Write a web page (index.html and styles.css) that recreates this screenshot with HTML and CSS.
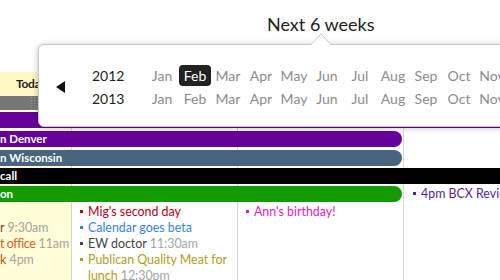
FILE: index.html
```html
<!DOCTYPE html>
<html lang="en">
<head>
<meta charset="UTF-8">
<meta name="viewport" content="width=device-width, initial-scale=1.0">
<title>Calendar</title>
<link rel="stylesheet" href="styles.css">
</head>
<body>
<header class="top">
    <h1 class="range">Next 6 weeks</h1>
</header>

<div class="week">
    <div class="col today"></div>
    <div class="col c2"></div>
    <div class="col c3"></div>
    <div class="col c4"></div>

    <div class="day-name">Today</div>

    <div class="bar gray r2"><span class="grip"></span></div>
    <div class="bar purple r3 wide"><span class="cut">Jennifer</span></div>
    <div class="bar purple r4"><span class="cut">Jason i</span>n Denver</div>
    <div class="bar slate r5"><span class="cut">Jamie i</span>n Wisconsin</div>
    <div class="bar black r6 wide"><span class="cut">Conference </span>call</div>
    <div class="bar green r7"><span class="cut">Vacati</span>on</div>

    <ul class="events e4">
        <li class="ev-purple">4pm BCX Review</li>
    </ul>

    <ul class="events e1">
        <li class="blank">&nbsp;</li>
        <li class="ev-brown"><span class="cut">Call docto</span>r <span class="t">9:30am</span></li>
        <li class="ev-orange"><span class="cut">Pos</span><span class="tight">t office</span> <span class="t">11am</span></li>
        <li class="ev-rust"><span class="cut">Wal</span>k <span class="t">4pm</span></li>
    </ul>
    <ul class="events e2">
        <li class="ev-red">Mig's second day</li>
        <li class="ev-blue">Calendar goes beta</li>
        <li class="ev-dark">EW doctor <span class="t">11:30am</span></li>
        <li class="ev-gold">Publican Quality Meat for lunch <span class="t">12:30pm</span></li>
    </ul>
    <ul class="events e3">
        <li class="ev-pink">Ann's birthday!</li>
    </ul>
</div>

<div class="picker">
    <svg class="notch" width="22" height="12" viewBox="0 0 22 12">
        <path d="M0 12.5 L11 1 L22 12.5" fill="#fff" stroke="#c9c9c9"/>
    </svg>
    <span class="prev"></span>
    <div class="years">
        <span class="yr">2012</span>
        <span class="m">Jan</span>
        <span class="m on">Feb</span>
        <span class="m">Mar</span>
        <span class="m">Apr</span>
        <span class="m">May</span>
        <span class="m">Jun</span>
        <span class="m">Jul</span>
        <span class="m">Aug</span>
        <span class="m">Sep</span>
        <span class="m">Oct</span>
        <span class="m">Nov</span>
        <span class="m">Dec</span>
        <span class="yr">2013</span>
        <span class="m">Jan</span>
        <span class="m">Feb</span>
        <span class="m">Mar</span>
        <span class="m">Apr</span>
        <span class="m">May</span>
        <span class="m">Jun</span>
        <span class="m">Jul</span>
        <span class="m">Aug</span>
        <span class="m">Sep</span>
        <span class="m">Oct</span>
        <span class="m">Nov</span>
        <span class="m">Dec</span>
    </div>
</div>
</body>
</html>
```

FILE: styles.css
```css
body {
    font-family: Lato, "Open Sans", sans-serif;
    margin: 0;
    width: 500px;
    height: 280px;
    overflow: hidden;
    position: relative;
    background: #fff;
    color: #222;
}
.top {
    height: 72px;
    box-sizing: border-box;
    padding: 13px 0 0 267px;
}
.range {
    margin: 0;
    font-size: 18px;
    font-weight: normal;
    line-height: 22px;
    color: #1e1e1e;
}

/* calendar grid, first column starts off screen */
.week {
    display: grid;
    grid-template-columns: repeat(4, 166px);
    grid-template-rows: 24px 14px 18px 19px 19px 18px 18px 1fr;
    height: 208px;
    margin-left: -94px;
}
.col {
    grid-row: 1 / -1;
    border-right: 1px solid #d4d4d4;
}
.col.c3 {
    border-right-color: #d8d8d8;
}
.today { grid-column: 1; background: #fffcd6; }
.c2 { grid-column: 2; }
.c3 { grid-column: 3; }
.c4 { grid-column: 4; }

.day-name {
    grid-column: 1;
    grid-row: 1;
    font-size: 12px;
    font-weight: bold;
    line-height: 24px;
    padding-left: 110px;
    letter-spacing: -0.3px;
    background: #fff8c4;
}

.bar {
    grid-column: 1 / 4;
    align-self: end;
    height: 16px;
    line-height: 16px;
    margin-right: 2px;
    border-radius: 0 8px 8px 0;
    color: #fff;
    font-size: 11.5px;
    font-weight: bold;
    white-space: nowrap;
    overflow: hidden;
}
.bar.wide {
    grid-column: 1 / 5;
    margin-right: 0;
    border-radius: 0;
}
.r2 { grid-row: 2; height: 14px; grid-column: 1 / 5; border-radius: 0; margin-right: 0; }
.r3 { grid-row: 3; }
.r4 { grid-row: 4; }
.r5 { grid-row: 5; }
.r6 { grid-row: 6; }
.r7 { grid-row: 7; }
.gray { background: #777; }
.purple { background: #66009b; }
.slate { background: #48657f; }
.black { background: #000; }
.green { background: #139b02; }
.grip {
    display: inline-block;
    width: 8px;
    height: 14px;
    margin-left: 124px;
    background: radial-gradient(#999 0.8px, transparent 1px) 0 0 / 3px 3px;
}

.cut {
    display: inline-block;
    vertical-align: top;
    width: 94px;
    text-align: right;
    overflow: hidden;
    white-space: nowrap;
    text-indent: 0;
}
.events .cut {
    width: 78px;
}
.tight {
    letter-spacing: -0.4px;
}

.events {
    grid-row: 8;
    list-style: none;
    margin: 0;
    padding: 2px 4px 0 16px;
    font-size: 12.4px;
    line-height: 16px;
}
.events li {
    text-indent: -8px;
}
.events li::before {
    content: "";
    display: inline-block;
    width: 3px;
    height: 3px;
    margin-right: 5px;
    vertical-align: 3px;
    background: currentColor;
}
.events li.blank::before { display: none; }
.e1 { grid-column: 1; white-space: nowrap; }
.e2 { grid-column: 2; }
.e3 { grid-column: 3; }
.e4 {
    grid-column: 4;
    grid-row: 7;
    align-self: center;
    padding: 0 0 0 17px;
    white-space: nowrap;
    line-height: 16px;
    margin-top: 2px;
}
.t { color: #a5a5a5; }
.ev-purple { color: #5a1f98; }
.ev-brown { color: #6b4a2c; }
.ev-orange { color: #d0632a; }
.ev-rust { color: #b3520f; }
.ev-red { color: #b0001c; }
.ev-blue { color: #3a82d6; }
.ev-dark { color: #444; }
.ev-gold { color: #b49b22; }
.ev-pink { color: #de1ec4; }

/* month picker popover */
.picker {
    position: absolute;
    left: 38px;
    top: 44px;
    width: 490px;
    height: 83px;
    box-sizing: border-box;
    padding: 19px 0 0 17px;
    display: flex;
    align-items: center;
    background: #fff;
    border: 1px solid #c9c9c9;
    border-radius: 6px;
    box-shadow: 0 1px 6px rgba(0, 0, 0, 0.25);
}
.notch {
    position: absolute;
    left: 271px;
    top: -12px;
}
.prev {
    align-self: flex-start;
    margin-top: 17px;
    width: 0;
    height: 0;
    border-top: 6px solid transparent;
    border-bottom: 6px solid transparent;
    border-right: 9px solid #111;
    margin-right: 27px;
}
.years {
    align-self: flex-start;
    display: grid;
    grid-template-columns: 53px repeat(12, 33px);
    grid-auto-rows: 23px;
    font-size: 14px;
}
.yr {
    line-height: 23px;
    color: #1e1e1e;
}
.m {
    line-height: 21px;
    margin: 1px 0 1px 1px;
    text-align: center;
    color: #8c8c8c;
}
.m.on {
    background: #222;
    color: #fff;
    border-radius: 4px;
}
```
